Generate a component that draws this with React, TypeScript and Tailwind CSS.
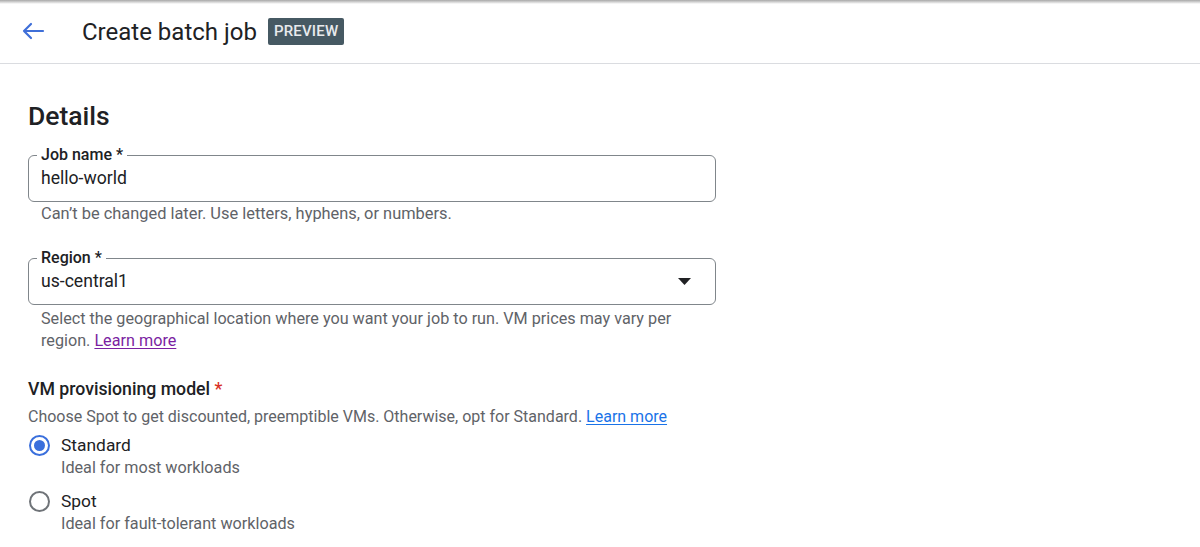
import { ReactNode } from 'react'

const FONT = "font-['Roboto','Liberation_Sans',sans-serif]"

function BackArrow() {
  return (
    <svg width="24" height="18" viewBox="0 0 24 18" fill="none" className="text-[#3f6fd8]">
      <path d="M22 9H3M10 2L3 9l7 7" stroke="currentColor" strokeWidth="2.2" strokeLinecap="round" strokeLinejoin="round" />
    </svg>
  )
}

function OutlinedField({ label, children, trailing }: { label: string; children: ReactNode; trailing?: ReactNode }) {
  return (
    <div className="relative w-[688px] h-[47px] border border-[#80868b] rounded-[6px] flex items-center px-3">
      <span className="absolute -top-[12px] left-[8px] bg-white px-1 text-[16px] leading-[22px] font-medium text-[#202124]">
        {label}
      </span>
      <span className="text-[17.6px] text-[#202124] flex-1">{children}</span>
      {trailing}
    </div>
  )
}

function Radio({ checked, title, hint }: { checked?: boolean; title: string; hint: string }) {
  return (
    <div className="flex gap-[11px]">
      <div className="w-[22px] h-[22px] shrink-0 flex items-center justify-center mt-[1px]">
        <div
          className={`w-[21px] h-[21px] rounded-full border-2 flex items-center justify-center ${checked ? 'border-[#3a6fdc]' : 'border-[#6f7378]'}`}
        >
          {checked && <div className="w-[11px] h-[11px] rounded-full bg-[#3a6fdc]" />}
        </div>
      </div>
      <div>
        <div className="text-[17.4px] leading-6 text-[#202124]">{title}</div>
        <div className="text-[16.2px] leading-[22px] text-[#5f6368]">{hint}</div>
      </div>
    </div>
  )
}

export default function App() {
  return (
    <div className={`${FONT} w-[1200px] h-[547px] bg-white overflow-hidden`}>
      <div className="h-[4px] bg-linear-to-b from-[#a8a8a8] to-white" />
      <header className="h-[60px] border-b border-[#dadce0] flex items-center">
        <div className="w-[82px] pl-[21px] flex items-center -mt-[5px]">
          <BackArrow />
        </div>
        <h1 className="text-[24px] text-[#202124] -mt-[4px]">Create batch job</h1>
        <span className="ml-[11px] -mt-[4px] h-[27px] px-[6px] flex items-center rounded-[2px] bg-[#465963] text-[#e8eaed] text-[15px] font-medium tracking-[0.2px]">
          PREVIEW
        </span>
      </header>

      <main className="pl-[28px] pt-[36px]">
        <h2 className="text-[26.5px] leading-8 font-medium text-[#202124]">Details</h2>

        <div className="mt-[23px]">
          <OutlinedField label="Job name *">hello-world</OutlinedField>
          <p className="mt-px pl-[13px] text-[16.4px] leading-[22px] text-[#5f6368]">
            Can’t be changed later. Use letters, hyphens, or numbers.
          </p>
        </div>

        <div className="mt-[33px]">
          <OutlinedField
            label="Region *"
            trailing={
              <svg width="13" height="7" viewBox="0 0 13 7" className="mr-[12px]">
                <path d="M0 0h13L6.5 7z" fill="#202124" />
              </svg>
            }
          >
            us-central1
          </OutlinedField>
          <p className="mt-[3px] pl-[13px] w-[688px] text-[16.2px] leading-[22px] text-[#5f6368]">
            Select the geographical location where you want your job to run. VM prices may vary per region.{' '}
            <a className="text-[#7b1fa2] underline underline-offset-2">Learn more</a>
          </p>
        </div>

        <div className="mt-[25px]">
          <div className="text-[17.7px] leading-6 font-medium text-[#202124]">
            VM provisioning model <span className="text-[#d93025]">*</span>
          </div>
          <p className="mt-[5px] text-[16px] leading-[22px] text-[#5f6368]">
            Choose Spot to get discounted, preemptible VMs. Otherwise, opt for Standard.{' '}
            <a className="text-[#1a73e8] underline underline-offset-2">Learn more</a>
          </p>
          <div className="mt-[5px] flex flex-col gap-[10px]">
            <Radio checked title="Standard" hint="Ideal for most workloads" />
            <Radio title="Spot" hint="Ideal for fault-tolerant workloads" />
          </div>
        </div>
      </main>
    </div>
  )
}
